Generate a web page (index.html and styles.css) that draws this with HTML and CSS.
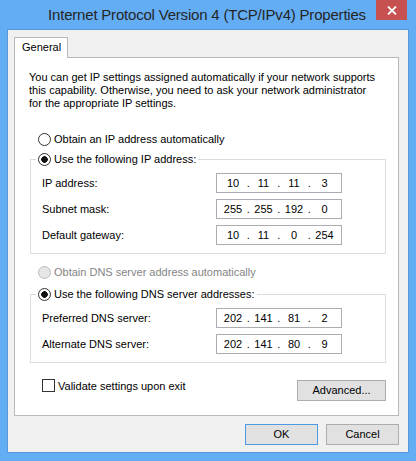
FILE: index.html
```html
<!DOCTYPE html>
<html lang="en">
<head>
<meta charset="utf-8">
<title>Internet Protocol Version 4 (TCP/IPv4) Properties</title>
<link rel="stylesheet" href="styles.css">
</head>
<body>
<div class="window">
  <div class="titlebar">
    <div class="title">Internet Protocol Version 4 (TCP/IPv4) Properties</div>
    <div class="close">
      <svg width="10" height="9" viewBox="0 0 10 9"><path d="M1 0.5 L9 8.5 M9 0.5 L1 8.5" stroke="#fff" stroke-width="1.8" fill="none"/></svg>
    </div>
  </div>
  <div class="client">
    <div class="tabs"><div class="tab">General</div></div>
    <div class="panel">
      <p class="intro">You can get IP settings assigned automatically if your network supports<br>this capability. Otherwise, you need to ask your network administrator<br>for the appropriate IP settings.</p>
      <div class="option first"><span class="radio"></span><span>Obtain an IP address automatically</span></div>
      <fieldset class="group ip">
        <legend class="option"><span class="radio checked"></span><span>Use the following IP address:</span></legend>
        <div class="rows">
          <div class="field"><span class="label">IP address:</span><div class="ipbox"><span class="seg">10</span><span class="dot">.</span><span class="seg">11</span><span class="dot">.</span><span class="seg">11</span><span class="dot">.</span><span class="seg">3</span></div></div>
          <div class="field"><span class="label">Subnet mask:</span><div class="ipbox"><span class="seg">255</span><span class="dot">.</span><span class="seg">255</span><span class="dot">.</span><span class="seg">192</span><span class="dot">.</span><span class="seg">0</span></div></div>
          <div class="field"><span class="label">Default gateway:</span><div class="ipbox"><span class="seg">10</span><span class="dot">.</span><span class="seg">11</span><span class="dot">.</span><span class="seg">0</span><span class="dot">.</span><span class="seg">254</span></div></div>
        </div>
      </fieldset>
      <div class="option disabled dns-auto"><span class="radio"></span><span>Obtain DNS server address automatically</span></div>
      <fieldset class="group dns">
        <legend class="option"><span class="radio checked"></span><span>Use the following DNS server addresses:</span></legend>
        <div class="rows">
          <div class="field"><span class="label">Preferred DNS server:</span><div class="ipbox"><span class="seg">202</span><span class="dot">.</span><span class="seg">141</span><span class="dot">.</span><span class="seg">81</span><span class="dot">.</span><span class="seg">2</span></div></div>
          <div class="field"><span class="label">Alternate DNS server:</span><div class="ipbox"><span class="seg">202</span><span class="dot">.</span><span class="seg">141</span><span class="dot">.</span><span class="seg">80</span><span class="dot">.</span><span class="seg">9</span></div></div>
        </div>
      </fieldset>
      <div class="footer-row">
        <div class="check"><span class="checkbox"></span><span>Validate settings upon exit</span></div>
        <div class="btn advanced">Advanced...</div>
      </div>
    </div>
    <div class="buttons">
      <div class="btn default">OK</div>
      <div class="btn">Cancel</div>
    </div>
  </div>
</div>
</body>
</html>
```
FILE: styles.css
```css
* { box-sizing: border-box; }
html, body { margin: 0; padding: 0; }
body {
  width: 416px;
  height: 461px;
  overflow: hidden;
  font-family: "Liberation Sans", Arial, sans-serif;
  font-size: 11px;
  color: #000;
}
.window {
  width: 416px;
  height: 461px;
  background: #63adf4;
  display: flex;
  flex-direction: column;
}
.titlebar {
  height: 29px;
  display: flex;
  align-items: flex-start;
  flex: none;
}
.title {
  flex: 1;
  padding-left: 38px;
  text-align: center;
  font-size: 15px;
  letter-spacing: -0.2px;
  line-height: 29px;
  color: #262626;
  white-space: nowrap;
}
.close {
  width: 31px;
  height: 20px;
  margin-right: 9px;
  background: #c75050;
  display: flex;
  align-items: center;
  justify-content: center;
}
.client {
  flex: 1;
  margin: 0 7px 8px 7px;
  border: 1px solid #5797d8;
  background: #f0f0f0;
  padding: 7px 9px 7px 6px;
  display: flex;
  flex-direction: column;
}
.tabs {
  display: flex;
  height: 20px;
}
.tab {
  position: relative;
  z-index: 1;
  width: 54px;
  height: 21px;
  background: #fff;
  border: 1px solid #b9b9b9;
  border-bottom: 0;
  padding-left: 7px;
  line-height: 19px;
}
.panel {
  background: #fff;
  border: 1px solid #b9b9b9;
  padding: 13px 12px 14px 14px;
  display: flex;
  flex-direction: column;
}
.intro {
  margin: 0;
  line-height: 13px;
  height: 39px;
  white-space: nowrap;
}
.option {
  display: flex;
  align-items: center;
  height: 14px;
  line-height: 13px;
  white-space: nowrap;
}
.option.first { margin-top: 22px; padding-left: 9px; }
.option.dns-auto { margin-top: 11px; padding-left: 9px; }
.option.disabled { color: #848484; }
.radio {
  flex: none;
  width: 13px;
  height: 13px;
  border: 1px solid #333;
  border-radius: 50%;
  background: #fff;
  margin-right: 3px;
}
.radio.checked {
  background: radial-gradient(circle, #111 0, #111 3px, #fff 3.6px);
}
.disabled .radio {
  border-color: #bcbcbc;
  background: #e6e6e6;
}
.group {
  margin: 6px 0 0 1px;
  padding: 6px 0 8px 5px;
  border: 1px solid #dcdcdc;
  min-width: 0;
}
.group.dns { margin-top: 8px; }
.group legend {
  padding: 0 2px;
  height: 15px;
}
.rows {
  display: flex;
  flex-direction: column;
  gap: 6px;
}
.field {
  display: flex;
  align-items: center;
  height: 20px;
}
.label {
  width: 180px;
  padding-left: 6px;
  flex: none;
}
.ipbox {
  width: 126px;
  height: 20px;
  border: 1px solid #abadb3;
  background: #fff;
  display: flex;
  align-items: center;
  padding-left: 4px;
  line-height: 13px;
}
.seg { width: 24px; text-align: center; }
.dot { width: 6.5px; text-align: center; }
.footer-row {
  display: flex;
  justify-content: space-between;
  align-items: flex-start;
}
.check {
  margin-top: 16px;
  padding-left: 13px;
  display: flex;
  align-items: center;
  height: 13px;
}
.checkbox {
  width: 13px;
  height: 13px;
  border: 1px solid #333;
  background: #fff;
  margin-right: 3px;
  flex: none;
}
.btn {
  height: 21px;
  width: 73px;
  background: #e1e1e1;
  border: 1px solid #adadad;
  text-align: center;
  line-height: 19px;
}
.btn.advanced {
  width: 89px;
  margin-top: 17px;
}
.btn.default { border-color: #4e9be4; }
.buttons {
  margin-top: 8px;
  display: flex;
  justify-content: flex-end;
  gap: 8px;
}
```
